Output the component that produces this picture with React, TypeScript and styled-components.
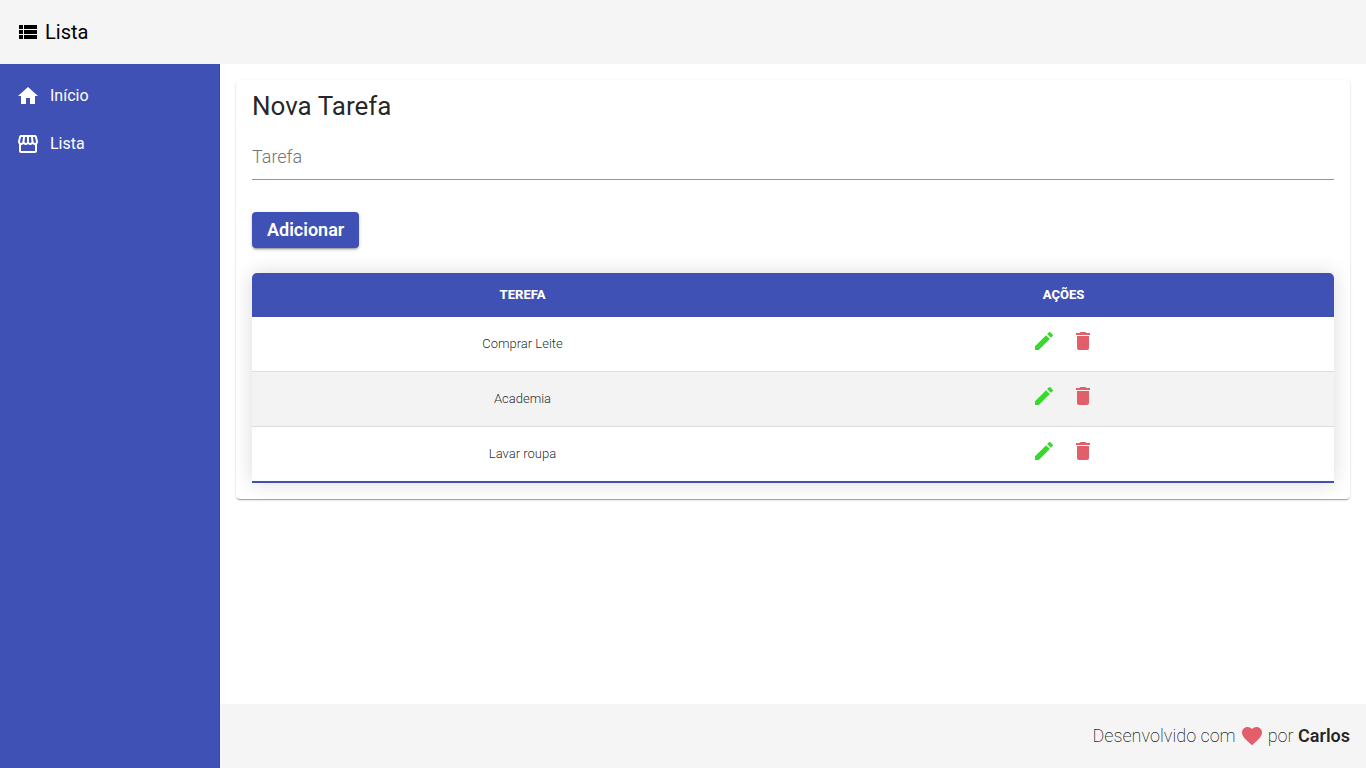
import React, { useState } from "react";
import styled, { createGlobalStyle } from "styled-components";
import {
  MdDelete,
  MdEdit,
  MdFavorite,
  MdHome,
  MdStorefront,
  MdViewList,
} from "react-icons/md";

const colors = {
  primary: "#3f51b5",
  bar: "#f5f5f5",
  text: "rgba(0, 0, 0, 0.87)",
  edit: "#38d92c",
  danger: "#e35e6b",
};

const GlobalStyle = createGlobalStyle`
  *, *::before, *::after {
    box-sizing: border-box;
  }
  body {
    margin: 0;
    background: #fff;
    color: ${colors.text};
    font-family: Roboto, "Helvetica Neue", sans-serif;
    font-size: 16px;
  }
`;

const Page = styled.div`
  display: flex;
  flex-direction: column;
  min-height: 100vh;
`;

const Header = styled.header`
  display: flex;
  align-items: center;
  height: 64px;
  padding: 0 16px;
  background: ${colors.bar};
`;

const Brand = styled.a`
  display: flex;
  align-items: center;
  gap: 5px;
  color: #000;
  font-size: 20px;
  font-weight: 450;
  line-height: 32px;
  text-decoration: none;
`;

const Body = styled.div`
  display: flex;
  flex: 1;
`;

const Sidebar = styled.nav`
  width: 220px;
  flex-shrink: 0;
  padding-top: 8px;
  background: ${colors.primary};
  border-right: 1px solid #384aa6;
`;

const NavItem = styled.a`
  display: flex;
  align-items: center;
  gap: 10px;
  height: 48px;
  padding: 0 16px;
  color: #fff;
  font-size: 16px;
  font-weight: 450;
  text-decoration: none;

  span {
    padding-bottom: 2px;
  }
`;

const Content = styled.div`
  display: flex;
  flex: 1;
  flex-direction: column;
  min-width: 0;
`;

const Main = styled.main`
  flex: 1;
  padding: 16px;
`;

const Card = styled.section`
  padding: 10px 16px 16px;
  border-radius: 4px;
  background: #fff;
  box-shadow: 0 2px 1px -1px rgba(0, 0, 0, 0.2),
    0 1px 1px 0 rgba(0, 0, 0, 0.14), 0 1px 3px 0 rgba(0, 0, 0, 0.12);
`;

const CardTitle = styled.h1`
  margin: 0;
  font-size: 26px;
  font-weight: 450;
  line-height: 32px;
`;

const TaskForm = styled.form`
  display: flex;
  flex-direction: column;
  align-items: flex-start;
  margin-bottom: 25px;
`;

const TaskInput = styled.input`
  width: 100%;
  height: 46px;
  margin: 12px 0 32px;
  padding: 0;
  border: 0;
  border-bottom: 1px solid #949494;
  outline: none;
  background: transparent;
  color: ${colors.text};
  font: 350 18px Roboto, sans-serif;

  &::placeholder {
    color: #757575;
    opacity: 1;
  }
`;

const AddButton = styled.button`
  height: 36px;
  padding: 0 15px 2px;
  border: 0;
  border-radius: 4px;
  background: ${colors.primary};
  color: #fff;
  font: 600 18px Roboto, sans-serif;
  cursor: pointer;
  box-shadow: 0 3px 1px -2px rgba(0, 0, 0, 0.2),
    0 2px 2px 0 rgba(0, 0, 0, 0.14), 0 1px 5px 0 rgba(0, 0, 0, 0.12);
`;

const Table = styled.table`
  width: 100%;
  table-layout: fixed;
  border-collapse: separate;
  border-spacing: 0;
  border-radius: 5px 5px 0 0;
  overflow: hidden;
  font-size: 13px;
  font-weight: 350;
  text-align: center;
  box-shadow: 0 0 20px rgba(0, 0, 0, 0.15);
`;

const HeadCell = styled.th`
  height: 44px;
  padding: 0 16px 2px;
  background: ${colors.primary};
  color: #fff;
  font-weight: 800;
  text-transform: uppercase;
`;

const Row = styled.tr`
  background: #fff;

  &:nth-child(even) {
    background: #f3f3f3;
  }
  & > td {
    border-bottom: 1px solid #ddd;
  }
  &:last-child > td {
    height: 56px;
    border-bottom: 2px solid ${colors.primary};
  }
`;

const Cell = styled.td`
  height: 55px;
  padding: 0 16px 2px;
`;

const Actions = styled.div`
  display: flex;
  justify-content: center;
  gap: 15px;
  padding-bottom: 4px;
`;

const IconButton = styled.button<{ $color: string }>`
  display: flex;
  padding: 0;
  border: 0;
  background: none;
  color: ${(p) => p.$color};
  cursor: pointer;
`;

const Footer = styled.footer`
  display: flex;
  align-items: center;
  justify-content: flex-end;
  gap: 4px;
  height: 64px;
  padding: 0 16px;
  background: ${colors.bar};
  font-size: 18px;
  font-weight: 200;

  span {
    padding-bottom: 2px;
  }
  svg {
    color: ${colors.danger};
  }
  strong {
    font-weight: 600;
  }
`;

export default function App() {
  const [tasks, setTasks] = useState(["Comprar Leite", "Academia", "Lavar roupa"]);
  const [name, setName] = useState("");

  const addTask = (event: React.FormEvent) => {
    event.preventDefault();
    if (name.trim()) {
      setTasks([...tasks, name.trim()]);
      setName("");
    }
  };

  return (
    <Page>
      <GlobalStyle />
      <Header>
        <Brand href="#lista">
          <MdViewList size={24} />
          Lista
        </Brand>
      </Header>
      <Body>
        <Sidebar>
          <NavItem href="#inicio">
            <MdHome size={24} />
            <span>Início</span>
          </NavItem>
          <NavItem href="#lista">
            <MdStorefront size={24} />
            <span>Lista</span>
          </NavItem>
        </Sidebar>
        <Content>
          <Main>
            <Card>
              <CardTitle>Nova Tarefa</CardTitle>
              <TaskForm onSubmit={addTask}>
                <TaskInput
                  aria-label="Tarefa"
                  placeholder="Tarefa"
                  value={name}
                  onChange={(event) => setName(event.target.value)}
                />
                <AddButton type="submit">Adicionar</AddButton>
              </TaskForm>
              <Table>
                <thead>
                  <tr>
                    <HeadCell scope="col">Terefa</HeadCell>
                    <HeadCell scope="col">Ações</HeadCell>
                  </tr>
                </thead>
                <tbody>
                  {tasks.map((task, index) => (
                    <Row key={index}>
                      <Cell>{task}</Cell>
                      <Cell>
                        <Actions>
                          <IconButton type="button" $color={colors.edit} aria-label="Editar">
                            <MdEdit size={24} />
                          </IconButton>
                          <IconButton
                            type="button"
                            $color={colors.danger}
                            aria-label="Excluir"
                            onClick={() => setTasks(tasks.filter((_, i) => i !== index))}
                          >
                            <MdDelete size={24} />
                          </IconButton>
                        </Actions>
                      </Cell>
                    </Row>
                  ))}
                </tbody>
              </Table>
            </Card>
          </Main>
          <Footer>
            <span>Desenvolvido com</span>
            <MdFavorite size={24} />
            <span>
              por <strong>Carlos</strong>
            </span>
          </Footer>
        </Content>
      </Body>
    </Page>
  );
}
